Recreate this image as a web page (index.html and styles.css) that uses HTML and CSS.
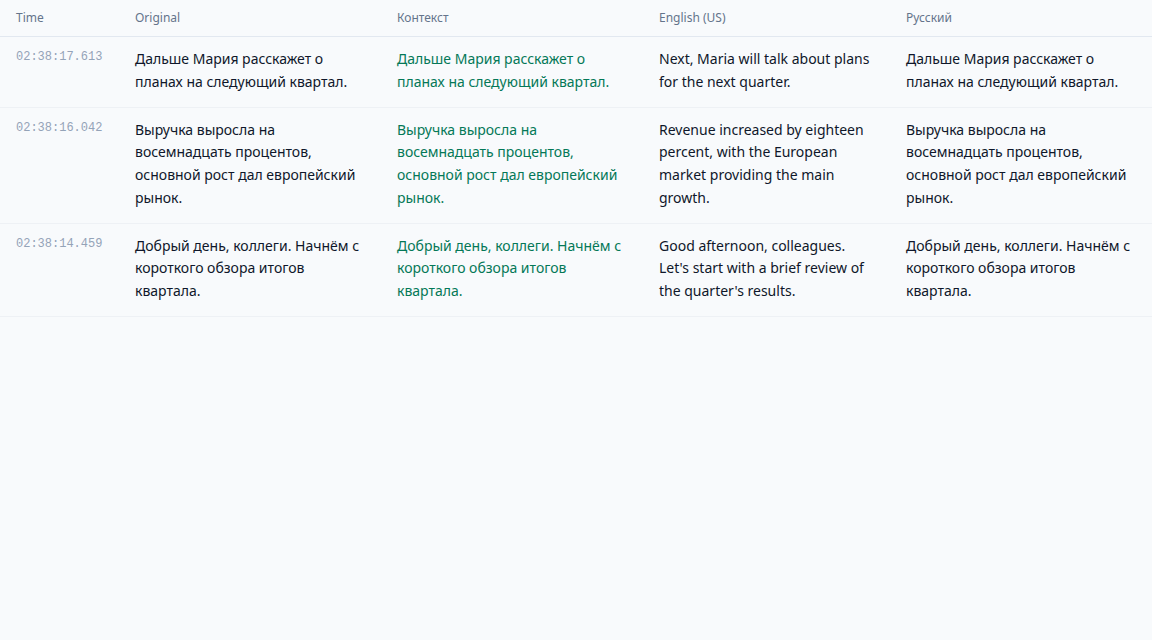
FILE: index.html
```html
<!DOCTYPE html>
<html lang="en">
<head>
    <meta charset="UTF-8">
    <meta name="viewport" content="width=device-width, initial-scale=1.0">
    <title>Transcript</title>
    <link rel="stylesheet" href="styles.css">
</head>
<body>
    <table class="transcript">
        <colgroup>
            <col class="col-time">
            <col class="col-wide">
            <col class="col-wide">
            <col class="col-en">
            <col class="col-wide">
        </colgroup>
        <thead>
            <tr>
                <th>Time</th>
                <th>Original</th>
                <th>Контекст</th>
                <th>English (US)</th>
                <th>Русский</th>
            </tr>
        </thead>
        <tbody>
            <tr>
                <td class="time">02:38:17.613</td>
                <td>Дальше Мария расскажет о планах на следующий квартал.</td>
                <td class="context">Дальше Мария расскажет о планах на следующий квартал.</td>
                <td>Next, Maria will talk about plans for the next quarter.</td>
                <td>Дальше Мария расскажет о планах на следующий квартал.</td>
            </tr>
            <tr>
                <td class="time">02:38:16.042</td>
                <td>Выручка выросла на восемнадцать процентов, основной рост дал европейский рынок.</td>
                <td class="context">Выручка выросла на восемнадцать процентов, основной рост дал европейский рынок.</td>
                <td>Revenue increased by eighteen percent, with the European market providing the main growth.</td>
                <td>Выручка выросла на восемнадцать процентов, основной рост дал европейский рынок.</td>
            </tr>
            <tr>
                <td class="time">02:38:14.459</td>
                <td>Добрый день, коллеги. Начнём с короткого обзора итогов квартала.</td>
                <td class="context">Добрый день, коллеги. Начнём с короткого обзора итогов квартала.</td>
                <td>Good afternoon, colleagues. Let's start with a brief review of the quarter's results.</td>
                <td>Добрый день, коллеги. Начнём с короткого обзора итогов квартала.</td>
            </tr>
        </tbody>
    </table>
</body>
</html>
```

FILE: styles.css
```css
body {
    margin: 0;
    padding: 0;
    background-color: #f8fafc;
    font-family: "Noto Sans", "Open Sans", sans-serif;
    color: #0f172a;
}
.transcript {
    width: 1152px;
    border-collapse: collapse;
    table-layout: fixed;
}
.col-time {
    width: 119px;
}
.col-wide {
    width: 262px;
}
.col-en {
    width: 247px;
}
.transcript th {
    text-align: left;
    font-weight: normal;
    font-size: 12px;
    line-height: 16px;
    color: #64748b;
    padding: 10px 16px 10px 16px;
    border-bottom: 1px solid #e2e8f0;
}
.transcript td {
    vertical-align: top;
    font-size: 14px;
    line-height: 1.625;
    padding: 11px 16px 13px 16px;
    border-bottom: 1px solid #eef1f5;
}
.transcript td.time {
    font-family: "Liberation Mono", "DejaVu Sans Mono", monospace;
    font-size: 12px;
    line-height: 16px;
    color: #94a3b8;
    padding-top: 12px;
}
.transcript td.context {
    color: #047857;
}
```
